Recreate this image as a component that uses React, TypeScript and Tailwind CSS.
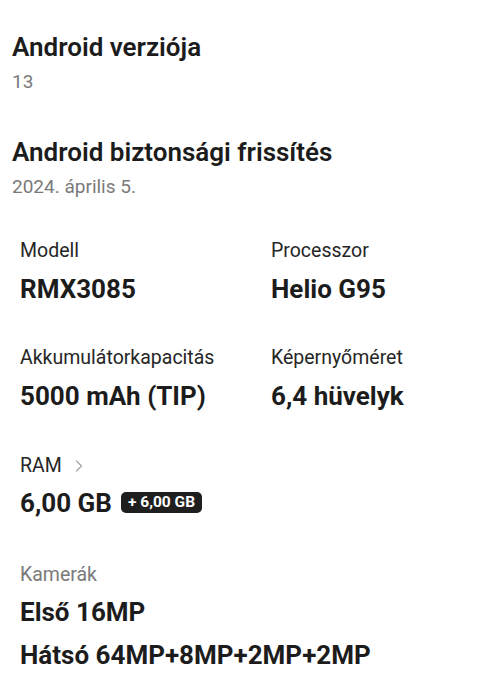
import { ChevronRight } from "lucide-react";

const font = { fontFamily: "Roboto, 'Noto Sans', sans-serif" };

type Spec = { label: string; value: string };

const specs: Spec[] = [
  { label: "Modell", value: "RMX3085" },
  { label: "Processzor", value: "Helio G95" },
  { label: "Akkumulátorkapacitás", value: "5000 mAh (TIP)" },
  { label: "Képernyőméret", value: "6,4 hüvelyk" },
];

export default function App() {
  return (
    <div className="w-[500px] h-[679px] bg-white overflow-hidden text-[#1c1c1c]" style={font}>
      {/* top info */}
      <div className="px-3 pt-[31px]">
        <div className="text-[26px] leading-[32px] font-semibold">Android verziója</div>
        <div className="text-[19px] leading-[24px] text-[#7a7a7a] mt-[7px]">13</div>

        <div className="text-[26px] leading-[32px] font-semibold mt-[42px]">
          Android biztonsági frissítés
        </div>
        <div className="text-[19px] leading-[24px] text-[#7a7a7a] mt-[7px]">2024. április 5.</div>
      </div>

      {/* spec grid */}
      <div className="grid grid-cols-[251px_1fr] px-5 mt-[40px] gap-y-[41px]">
        {specs.map((s) => (
          <div key={s.label}>
            <div className="text-[19.5px] leading-[24px] text-[#262626]">{s.label}</div>
            <div className="text-[26px] leading-[32px] font-bold mt-[10px]">{s.value}</div>
          </div>
        ))}
      </div>

      {/* RAM */}
      <div className="px-5 mt-[42px]">
        <div className="flex items-center gap-[11px] text-[19.5px] leading-[24px] text-[#262626]">
          RAM
          <ChevronRight size={20} strokeWidth={1.6} className="text-[#a8a8a8] -ml-[4px]" />
        </div>
        <div className="flex items-center gap-[9px] mt-[9px]">
          <span className="text-[26px] leading-[32px] font-bold">6,00 GB</span>
          <span className="bg-[#1f1f1f] text-white text-[15.5px] leading-[21px] font-bold px-[7px] rounded-[5px] mt-[-2px]">
            + 6,00 GB
          </span>
        </div>
      </div>

      {/* cameras */}
      <div className="px-5 mt-[44px]">
        <div className="text-[19.5px] leading-[24px] text-[#7a7a7a]">Kamerák</div>
        <div className="text-[26px] leading-[32px] font-bold mt-[9px]">Első 16MP</div>
        <div className="text-[26px] leading-[32px] font-bold mt-[11px]">Hátsó 64MP+8MP+2MP+2MP</div>
      </div>
    </div>
  );
}
